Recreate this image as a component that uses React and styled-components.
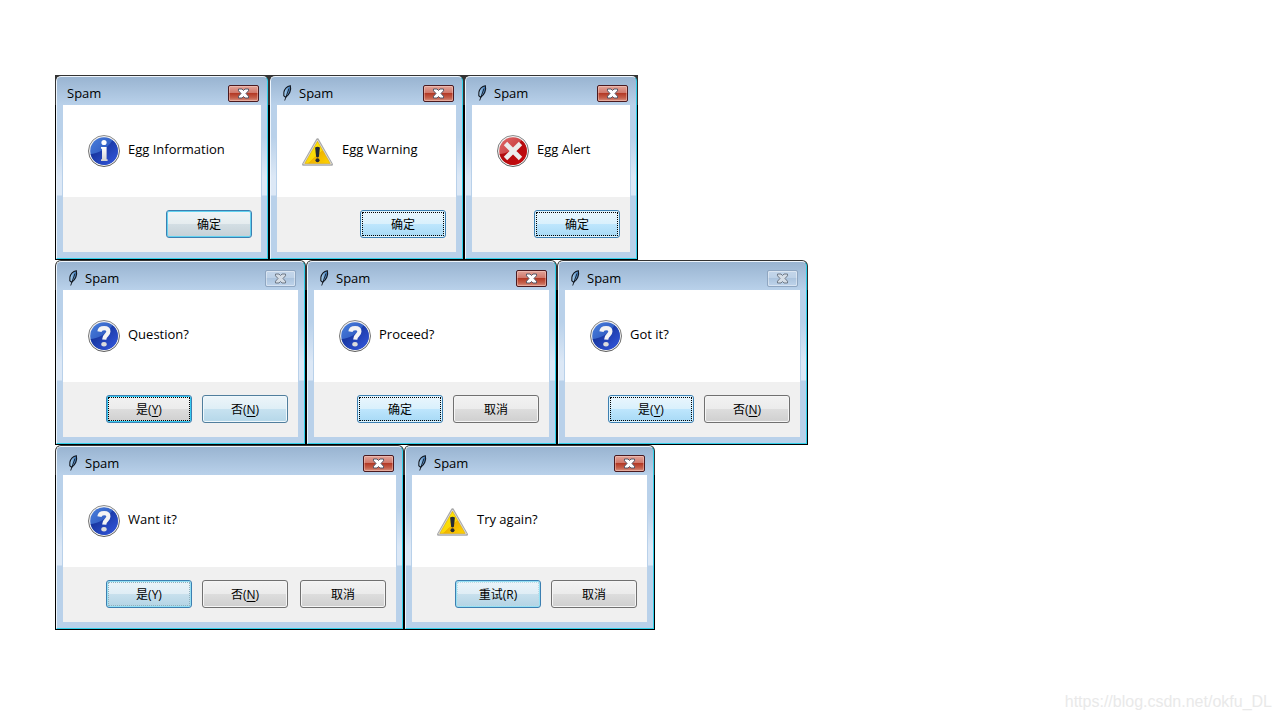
import React from 'react';
import styled, { createGlobalStyle, css } from 'styled-components';

const DIALOG_ROWS = [
    [
        { WIDTH: 214, KIND: "info", TEXT: "Egg Information", NO_FEATHER: true, BUTTONS: [{ LABEL: "确定", LOOK: "fading" }] },
        { WIDTH: 195, KIND: "warning", TEXT: "Egg Warning", BUTTONS: [{ LABEL: "确定", LOOK: "hot", FOCUS: "#000" }] },
        { WIDTH: 174, KIND: "error", TEXT: "Egg Alert", BUTTONS: [{ LABEL: "确定", LOOK: "hot", FOCUS: "#000" }] },
    ],
    [
        {
            WIDTH: 251, KIND: "question", TEXT: "Question?", INACTIVE: true,
            BUTTONS: [{ LABEL: "是", HOTKEY: "Y", LOOK: "default", FOCUS: "#000" }, { LABEL: "否", HOTKEY: "N", LOOK: "warm" }],
        },
        {
            WIDTH: 251, KIND: "question", TEXT: "Proceed?",
            BUTTONS: [{ LABEL: "确定", LOOK: "hot", FOCUS: "#000" }, { LABEL: "取消", LOOK: "plain" }],
        },
        {
            WIDTH: 251, KIND: "question", TEXT: "Got it?", INACTIVE: true,
            BUTTONS: [{ LABEL: "是", HOTKEY: "Y", LOOK: "hot", FOCUS: "#000" }, { LABEL: "否", HOTKEY: "N", LOOK: "plain" }],
        },
    ],
    [
        {
            WIDTH: 349, KIND: "question", TEXT: "Want it?",
            BUTTONS: [
                { LABEL: "是", HOTKEY: "Y", HIDE_CUE: true, LOOK: "cooling", FOCUS: "#8fb0bd" },
                { LABEL: "否", HOTKEY: "N", LOOK: "plain" },
                { LABEL: "取消", LOOK: "plain", APART: true },
            ],
        },
        {
            WIDTH: 251, KIND: "warning", TEXT: "Try again?",
            BUTTONS: [{ LABEL: "重试", HOTKEY: "R", HIDE_CUE: true, LOOK: "cooling", FOCUS: "#bcd9e4" }, { LABEL: "取消", LOOK: "plain" }],
        },
    ],
];

const App = () => {
    return (
        <Page>
            <GlobalStyle />
            <Gradients />
            <Board>
                {
                    DIALOG_ROWS.map((row, rowIndex) => {
                        return (
                            <DialogRow key={"Row" + rowIndex}>
                                {row.map((dialog, index) => createDialog(dialog, `dialog-${rowIndex}-${index}`, rowIndex === 0))}
                            </DialogRow>
                        );
                    })
                }
            </Board>
            <Watermark href="https://blog.csdn.net/okfu_DL">https://blog.csdn.net/okfu_DL</Watermark>
        </Page>
    );
}

const createDialog = (dialog, id, dark) => {
    return (
        <Backdrop key={id} $width={dialog.WIDTH} $dark={dark}>
            <Shell>
                <Frame role="dialog" aria-labelledby={id}>
                    <TitleBar>
                        {!dialog.NO_FEATHER && <Feather />}
                        <Title id={id}>Spam</Title>
                        <CloseButton type="button" aria-label="Close" $inactive={dialog.INACTIVE}>
                            <CloseGlyph inactive={dialog.INACTIVE} />
                        </CloseButton>
                    </TitleBar>
                    <Client>
                        <Message>
                            <KindIcon kind={dialog.KIND} />
                            <Text>{dialog.TEXT}</Text>
                        </Message>
                        <Footer $wide={!dialog.NO_FEATHER}>
                            {dialog.BUTTONS.map(createButton)}
                        </Footer>
                    </Client>
                </Frame>
            </Shell>
        </Backdrop>
    )
}

const createButton = (button, index) => {
    return (
        <PushButton key={"Button" + index} type="button" $look={button.LOOK} $apart={button.APART}>
            <Face $focus={button.FOCUS}>
                {button.LABEL}
                {button.HOTKEY && <>(<Hotkey $hidden={button.HIDE_CUE}>{button.HOTKEY}</Hotkey>)</>}
            </Face>
        </PushButton>
    )
}

const Gradients = () => (
    <Defs aria-hidden="true">
        <defs>
            <linearGradient id="ring" x1="0" y1="0" x2="0" y2="1">
                <stop offset="0" stopColor="#8d8d8d" />
                <stop offset="1" stopColor="#5e5e5e" />
            </linearGradient>
            <linearGradient id="blueTop" x1="0" y1="0" x2="1" y2="1">
                <stop offset="0" stopColor="#4a80dc" />
                <stop offset="1" stopColor="#1c3fae" />
            </linearGradient>
            <linearGradient id="blueLow" x1="0" y1="0" x2="1" y2="1">
                <stop offset="0" stopColor="#0b2783" />
                <stop offset="1" stopColor="#3559e0" />
            </linearGradient>
            <linearGradient id="redTop" x1="0" y1="0" x2="1" y2="1">
                <stop offset="0" stopColor="#e06a6a" />
                <stop offset="1" stopColor="#b81a1e" />
            </linearGradient>
            <linearGradient id="redLow" x1="0" y1="0" x2="1" y2="1">
                <stop offset="0" stopColor="#a50d10" />
                <stop offset="1" stopColor="#c8090c" />
            </linearGradient>
            <linearGradient id="yellow" x1="0" y1="0" x2="1" y2="1">
                <stop offset="0" stopColor="#fff200" />
                <stop offset="0.55" stopColor="#fbd808" />
                <stop offset="0.56" stopColor="#f0b400" />
                <stop offset="1" stopColor="#ffd500" />
            </linearGradient>
            <linearGradient id="glyph" x1="0" y1="0" x2="0" y2="1">
                <stop offset="0" stopColor="#ffffff" />
                <stop offset="1" stopColor="#d2d2d2" />
            </linearGradient>
            <linearGradient id="quill" x1="0" y1="0" x2="1" y2="0">
                <stop offset="0" stopColor="#b9dcf5" />
                <stop offset="1" stopColor="#2f6fb5" />
            </linearGradient>
        </defs>
    </Defs>
)

const Disc = ({ tone }) => (
    <>
        <circle cx="16" cy="16" r="15.500" fill="#f2f2f2" stroke="url(#ring)" />
        <circle cx="16" cy="16" r="13.800" fill={`url(#${tone}Top)`} />
        <path d="M2.600 19C9 18.500 19 14.500 24.500 5.200A13.800 13.800 0 1 1 2.600 19Z" fill={`url(#${tone}Low)`} />
    </>
)

const KindIcon = ({ kind }) => {
    if (kind === "warning") {
        return (
            <Picture viewBox="0 0 32 32" aria-hidden="true">
                <path d="M15.500 4.500L29.700 29.500H1.300Z" fill="#c5c5c5" stroke="#aaa" strokeWidth="2.600" strokeLinejoin="round" />
                <path d="M15.500 5L29.400 29H1.600Z" fill="#e4e4e4" stroke="#e0e0e0" strokeWidth="0.800" strokeLinejoin="round" />
                <path d="M15.500 6.300L28.200 28.400H2.800Z" fill="url(#yellow)" stroke="#d9a400" strokeWidth="0.600" strokeLinejoin="round" />
                <path d="M13.100 12.400Q15.500 11 17.900 12.400L16.900 21.800Q15.500 23 14.100 21.800Z" fill="#242a35" />
                <circle cx="15.500" cy="25.300" r="2" fill="#242a35" />
            </Picture>
        );
    }
    if (kind === "error") {
        return (
            <Picture viewBox="0 0 32 32" aria-hidden="true">
                <Disc tone="red" />
                <path d="M10.200 10.200L21.800 21.800M21.800 10.200L10.200 21.800" stroke="#ececec" strokeWidth="4.800" strokeLinecap="square" />
            </Picture>
        );
    }
    return (
        <Picture viewBox="0 0 32 32" aria-hidden="true">
            <Disc tone="blue" />
            {kind === "info" && <>
                <circle cx="16" cy="7.500" r="2.600" fill="#fff" />
                <path d="M13 12H18.600V24.200H19.600V26H13V24.200H14V13.800H13Z" fill="url(#glyph)" />
            </>}
            {kind === "question" && <>
                <path d="M11.400 11.600C11.800 8.800 13.900 8.200 16.100 8.200C19 8.200 20.400 9.600 20.400 11.600C20.400 15 16.300 14.800 16.200 19.600" fill="none" stroke="#f4f4f4" strokeWidth="4.200" />
                <ellipse cx="16" cy="24.200" rx="2.700" ry="2.200" fill="#dcdcdc" />
            </>}
        </Picture>
    );
}

const Feather = () => (
    <FeatherPicture viewBox="0 0 16 16" aria-hidden="true">
        <path d="M9.300 0.700C6.300 1.300 3.600 4 2.900 7.200L2.800 10.700L4.700 12.300C8.200 10 10.600 5.200 9.300 0.700Z" fill="url(#quill)" stroke="#10151d" strokeWidth="1.100" />
        <path d="M8 3.500L3.700 15.500" stroke="#10151d" strokeWidth="0.900" fill="none" />
    </FeatherPicture>
)

const CloseGlyph = ({ inactive }) => (
    <svg width="13" height="11" viewBox="0 0 13 11" aria-hidden="true">
        <path
            d="M1.500 1H5L6.500 2.500L8 1H11.500V2.800L9 5.500L11.500 8.200V10H8L6.500 8.500L5 10H1.500V8.200L4 5.500L1.500 2.800Z"
            fill={inactive ? "#d5dde6" : "#fff"}
            stroke={inactive ? "#6e7885" : "#535666"}
            strokeWidth="1"
            strokeLinejoin="round"
        />
    </svg>
)

//styles
const GlobalStyle = createGlobalStyle`
    body {
        margin: 0;
        background-color: #fff;
    }
    *, *::before, *::after {
        box-sizing: border-box;
    }
`

const Page = styled.main`
    min-height: 100vh;
    display: flex;
    flex-direction: column;
    color: #000;
    font: 13px 'Open Sans', 'Noto Sans CJK SC', sans-serif;
`

const Defs = styled.svg`
    position: absolute;
    width: 0;
    height: 0;
`

const Board = styled.div`
    padding: 75px 0 0 55px;
`

const DialogRow = styled.div`
    display: flex;
`

const Backdrop = styled.div`
    width: ${props => props.$width}px;
    flex: none;
    background: ${props => props.$dark ? "linear-gradient(#333 30px, #000 30px)" : "linear-gradient(#fff 10px, #000 10px)"};
`

const Shell = styled.div`
    padding: 1px;
    border-radius: 6px 6px 0 0;
    background: linear-gradient(#333 30px, #000 30px);
`

const Frame = styled.section`
    padding: 0 5px 6px;
    border: 1px solid;
    border-color: #eef5fc #2fd0ea #2fd0ea #eef5fc;
    border-radius: 5px 5px 0 0;
    background: linear-gradient(#99b4d1 0, #b9d1ea 28px, #b9d1ea 60px, #dce8f6 100px, #dce8f6 118px, #b9d1ea 119px);
`

const TitleBar = styled.header`
    height: 28px;
    padding: 8px 3px 0 5px;
    display: flex;
    align-items: flex-start;
`

const FeatherPicture = styled.svg`
    width: 16px;
    height: 16px;
    margin-right: 2px;
`

const Title = styled.h2`
    margin: 0 auto 0 0;
    font-size: 13px;
    font-weight: 400;
    line-height: 16px;
`

const CloseButton = styled.button`
    width: 31px;
    height: 17px;
    padding: 0;
    display: flex;
    align-items: center;
    justify-content: center;
    border: 1px solid #4a1a20;
    border-radius: 2px;
    background: linear-gradient(#e2a398 0, #d0796c 45%, #b43a26 50%, #c5614c 80%, #d99384 100%);
    box-shadow: inset 0 0 0 1px rgba(255, 220, 210, 0.4);
    ${props => props.$inactive && css`
        border-color: #8fa6c1;
        background: linear-gradient(#c4d6ea 0, #bdd1e7 45%, #acc4de 50%, #bfd4eb 100%);
        box-shadow: inset 0 0 0 1px rgba(255, 255, 255, 0.4);
    `}
`

const Client = styled.div`
    border: solid #b9d1ea;
    border-width: 0 1px;
    background-color: #fff;
`

const Message = styled.div`
    height: 92px;
    padding: 30px 0 0 25px;
    display: flex;
`

const Picture = styled.svg`
    width: 32px;
    height: 32px;
    flex: none;
`

const Text = styled.p`
    margin: 0 0 0 8px;
    line-height: 28px;
    white-space: nowrap;
`

const Footer = styled.footer`
    padding: 13px ${props => props.$wide ? 10 : 9}px 14px;
    display: flex;
    justify-content: flex-end;
    gap: 10px;
    background-color: #f0f0f0;
`

const LOOKS = {
    plain: css`
        border-color: #707070;
        background: linear-gradient(#f2f2f2 0, #ebebeb 50%, #dddddd 50%, #cfcfcf 100%);
        box-shadow: inset 0 0 0 1px #f5f5f5;
    `,
    default: css`
        border-color: #3c7fb1;
        background: linear-gradient(#f2f2f2 0, #ebebeb 50%, #dddddd 50%, #cfcfcf 100%);
        box-shadow: inset 0 0 0 1px #35c9f0;
    `,
    fading: css`
        border-color: #3c7fb1;
        background: linear-gradient(#f0f4f6 0, #e5ecef 50%, #d3dee4 50%, #c5d0d6 100%);
        box-shadow: inset 0 0 0 1px #62d2f0;
    `,
    hot: css`
        border-color: #3c7fb1;
        background: linear-gradient(#eaf6fd 0, #d9f0fc 50%, #bee6fd 50%, #a7d9f5 100%);
        box-shadow: inset 0 0 0 1px #dff4fd;
    `,
    warm: css`
        border-color: #507e9d;
        background: linear-gradient(#edf5f9 0, #deeef6 50%, #c7e2f0 50%, #b5d7e9 100%);
        box-shadow: inset 0 0 0 1px #eff8fc;
    `,
    cooling: css`
        border-color: #3c7fb1;
        background: linear-gradient(#ecf4f9 0, #dfedf5 50%, #c8e0ed 50%, #b2d3e4 100%);
        box-shadow: inset 0 0 0 1px #95e0f4;
    `,
}

const PushButton = styled.button`
    width: 86px;
    height: 28px;
    padding: 1px;
    margin-left: ${props => props.$apart ? 2 : 0}px;
    border: 1px solid;
    border-radius: 3px;
    color: #000;
    font: 12px 'Open Sans', 'Noto Sans CJK SC', sans-serif;
    ${props => LOOKS[props.$look]}
`

const Face = styled.span`
    height: 24px;
    display: block;
    border: 1px dotted ${props => props.$focus || "transparent"};
    line-height: 24px;
`

const Hotkey = styled.span`
    text-decoration: ${props => props.$hidden ? "none" : "underline"};
    text-underline-offset: 2px;
`

const Watermark = styled.a`
    margin: auto 8px 8px auto;
    color: #e9e9e9;
    font: 16px 'Liberation Sans', Arial, sans-serif;
    line-height: 20px;
    text-decoration: none;
`

export default App;
